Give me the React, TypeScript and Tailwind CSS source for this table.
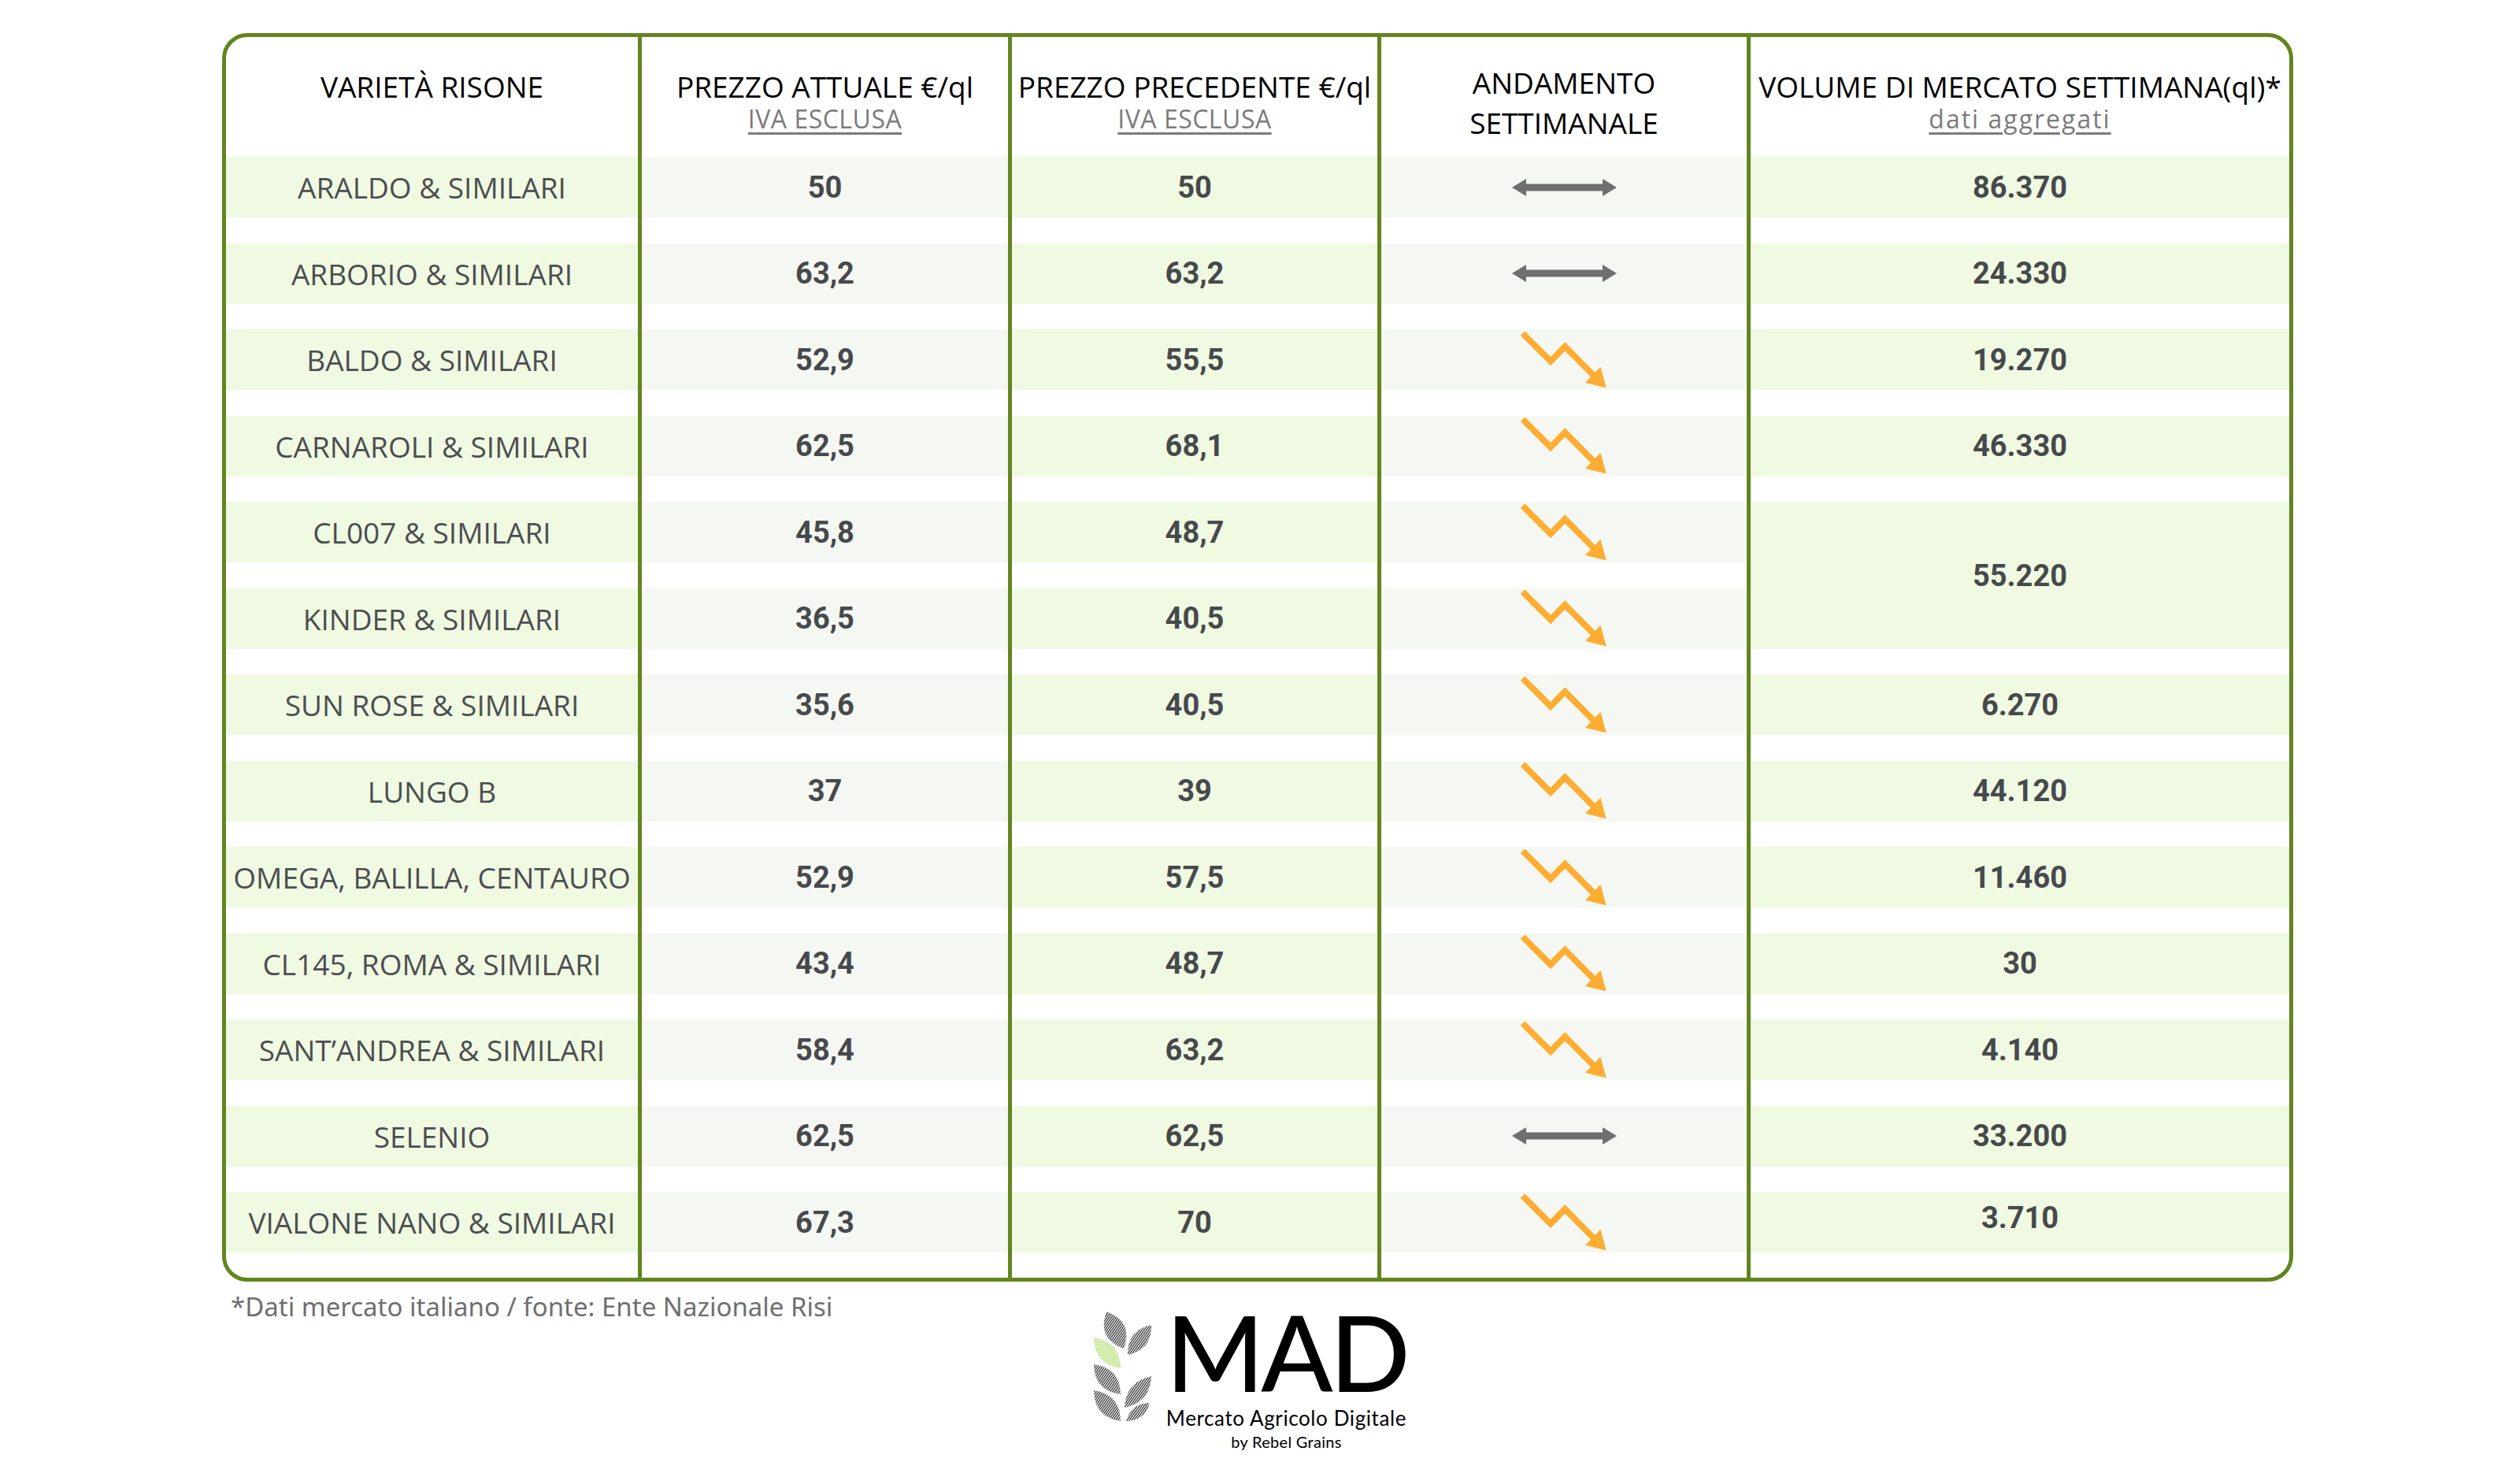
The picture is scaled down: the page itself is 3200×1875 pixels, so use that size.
import React from 'react'

type Trend = 'flat' | 'down'

type Row = {
  name: string
  now: string
  prev: string
  trend: Trend
  vol?: string
  span?: boolean
  lift?: boolean
}

const rows: Row[] = [
  { name: 'ARALDO & SIMILARI', now: '50', prev: '50', trend: 'flat', vol: '86.370' },
  { name: 'ARBORIO & SIMILARI', now: '63,2', prev: '63,2', trend: 'flat', vol: '24.330' },
  { name: 'BALDO & SIMILARI', now: '52,9', prev: '55,5', trend: 'down', vol: '19.270' },
  { name: 'CARNAROLI & SIMILARI', now: '62,5', prev: '68,1', trend: 'down', vol: '46.330' },
  { name: 'CL007 & SIMILARI', now: '45,8', prev: '48,7', trend: 'down', vol: '55.220', span: true },
  { name: 'KINDER & SIMILARI', now: '36,5', prev: '40,5', trend: 'down' },
  { name: 'SUN ROSE & SIMILARI', now: '35,6', prev: '40,5', trend: 'down', vol: '6.270' },
  { name: 'LUNGO B', now: '37', prev: '39', trend: 'down', vol: '44.120' },
  { name: 'OMEGA, BALILLA, CENTAURO', now: '52,9', prev: '57,5', trend: 'down', vol: '11.460' },
  { name: 'CL145, ROMA & SIMILARI', now: '43,4', prev: '48,7', trend: 'down', vol: '30' },
  { name: 'SANT’ANDREA & SIMILARI', now: '58,4', prev: '63,2', trend: 'down', vol: '4.140' },
  { name: 'SELENIO', now: '62,5', prev: '62,5', trend: 'flat', vol: '33.200' },
  { name: 'VIALONE NANO & SIMILARI', now: '67,3', prev: '70', trend: 'down', vol: '3.710', lift: true },
]

const FlatArrow = () => (
  <svg width="133" height="22" viewBox="0 0 133 22">
    <polygon
      points="0,11 18,0 18,6.5 115,6.5 115,0 133,11 115,22 115,15.5 18,15.5 18,22"
      fill="#6f6f6f"
    />
  </svg>
)

const DownArrow = () => (
  <svg width="110" height="72" viewBox="0 0 110 72">
    <polyline
      points="2.5,2.2 38,37.5 56.3,19 92.5,55.5"
      fill="none"
      stroke="#fdad32"
      strokeWidth="8"
      strokeLinejoin="miter"
    />
    <polygon points="108.7,71.3 101.4,44.7 82,64.7" fill="#fdad32" />
  </svg>
)

// almond-shaped leaf between two tips
const leaf = (x1: number, y1: number, x2: number, y2: number, w: number) => {
  const mx = (x1 + x2) / 2
  const my = (y1 + y2) / 2
  const dx = x2 - x1
  const dy = y2 - y1
  const len = Math.hypot(dx, dy)
  const px = (-dy / len) * w * 2
  const py = (dx / len) * w * 2
  return `M${x1},${y1} Q${mx + px},${my + py} ${x2},${y2} Q${mx - px},${my - py} ${x1},${y1} Z`
}

const Leaves = () => (
  <svg width="74" height="142" viewBox="0 0 74 142">
    <defs>
      <pattern id="hatchDark" patternUnits="userSpaceOnUse" width="2.4" height="2.4" patternTransform="rotate(35)">
        <line x1="0" y1="0" x2="0" y2="2.4" stroke="#0a0a0a" strokeWidth="2.1" />
      </pattern>
      <pattern id="hatchGreen" patternUnits="userSpaceOnUse" width="2.4" height="2.4" patternTransform="rotate(35)">
        <line x1="0" y1="0" x2="0" y2="2.4" stroke="#9bd646" strokeWidth="2.1" />
      </pattern>
    </defs>
    <path d={leaf(17, 2, 39, 49, 13)} fill="url(#hatchDark)" />
    <path d={leaf(74, 19, 44, 57, 10)} fill="url(#hatchDark)" />
    <path d={leaf(1, 35, 35, 74, 11)} fill="url(#hatchGreen)" />
    <path d={leaf(1, 69, 35, 107, 11)} fill="url(#hatchDark)" />
    <path d={leaf(74, 84, 40, 124, 10)} fill="url(#hatchDark)" />
    <path d={leaf(1, 102, 35, 141, 11)} fill="url(#hatchDark)" />
    <path d={leaf(72, 118, 42, 141, 7)} fill="url(#hatchDark)" />
  </svg>
)

const green = 'bg-[#f0f9e1]'
const gray = 'bg-[#f5f7f2]'

const Band = ({
  tone,
  tall,
  lift,
  children,
}: {
  tone: string
  tall?: boolean
  lift?: boolean
  children: React.ReactNode
}) => (
  <div
    className={`flex items-center justify-center ${tall ? 'h-[187px]' : 'h-[77px]'} ${lift ? 'pb-[12px]' : ''} ${tone}`}
  >
    {children}
  </div>
)

const Num = ({ v }: { v: string }) => (
  <span className="font-['Roboto',sans-serif] text-[38px] leading-none font-bold text-[#46494c]">{v}</span>
)

const Sub = ({ wide, children }: { wide?: boolean; children: React.ReactNode }) => (
  <div
    className={`text-[32px] leading-[36px] text-[#7b7b7b] underline decoration-[3px] underline-offset-[5px] ${wide ? 'tracking-[2px]' : 'tracking-[0.5px]'}`}
  >
    {children}
  </div>
)

export default function App() {
  return (
    <div className="h-[1875px] w-[3200px] bg-white pt-[42px] pl-[282px] font-['Open_Sans',sans-serif]">
      <div className="grid h-[1585px] w-[2630px] grid-cols-[523px_470px_469px_469px_1fr] grid-rows-[152px_repeat(13,109.5px)] overflow-hidden rounded-[32px] border-[5px] border-[#628520]">
        <div className="pt-[40px] text-center text-[37px] leading-[46px] text-black">VARIETÀ RISONE</div>
        <div className="border-l-[5px] border-[#628520] pt-[40px] text-center">
          <div className="text-[37px] leading-[46px] text-black">PREZZO ATTUALE €/ql</div>
          <Sub>IVA ESCLUSA</Sub>
        </div>
        <div className="border-l-[5px] border-[#628520] pt-[40px] text-center">
          <div className="text-[37px] leading-[46px] whitespace-nowrap text-black">PREZZO PRECEDENTE €/ql</div>
          <Sub>IVA ESCLUSA</Sub>
        </div>
        <div className="border-l-[5px] border-[#628520] pt-[32px] text-center text-[37px] leading-[51px] text-black">
          <div>ANDAMENTO</div>
          <div>SETTIMANALE</div>
        </div>
        <div className="border-l-[5px] border-[#628520] pt-[40px] text-center">
          <div className="text-[37px] leading-[46px] whitespace-nowrap text-black">VOLUME DI MERCATO SETTIMANA(ql)*</div>
          <Sub wide>dati aggregati</Sub>
        </div>

        {rows.map((r) => (
          <React.Fragment key={r.name}>
            <div>
              <Band tone={green}>
                <span className="text-[37px] leading-none whitespace-nowrap text-[#4b4e51]">{r.name}</span>
              </Band>
            </div>
            <div className="border-l-[5px] border-[#628520]">
              <Band tone={gray}>
                <Num v={r.now} />
              </Band>
            </div>
            <div className="border-l-[5px] border-[#628520]">
              <Band tone={green}>
                <Num v={r.prev} />
              </Band>
            </div>
            <div className="border-l-[5px] border-[#628520]">
              <Band tone={gray}>{r.trend === 'flat' ? <FlatArrow /> : <DownArrow />}</Band>
            </div>
            {r.vol && (
              <div className={`border-l-[5px] border-[#628520] ${r.span ? 'row-span-2' : ''}`}>
                <Band tone={green} tall={r.span} lift={r.lift}>
                  <Num v={r.vol} />
                </Band>
              </div>
            )}
          </React.Fragment>
        ))}
      </div>

      <div className="grid grid-cols-[1106px_auto]">
        <div className="pt-[12px] pl-[11px] font-['Noto_Sans',sans-serif] text-[33px] leading-[40px] text-[#6f6f6f]">
          *Dati mercato italiano / fonte: Ente Nazionale Risi
        </div>
        <div className="flex items-start gap-[17px] pt-[22px]">
          <div className="pt-[14px]">
            <Leaves />
          </div>
          <div className="flex w-[309px] flex-col items-center font-['Lato',sans-serif] text-black">
            <div className="h-[132px] text-[134px] leading-none font-medium tracking-[-4px]">MAD</div>
            <div className="mt-[6px] text-[26px] leading-none tracking-[0.6px] whitespace-nowrap">
              Mercato Agricolo Digitale
            </div>
            <div className="mt-[7px] text-[20px] leading-none tracking-[0.3px]">by Rebel Grains</div>
          </div>
        </div>
      </div>
    </div>
  )
}
